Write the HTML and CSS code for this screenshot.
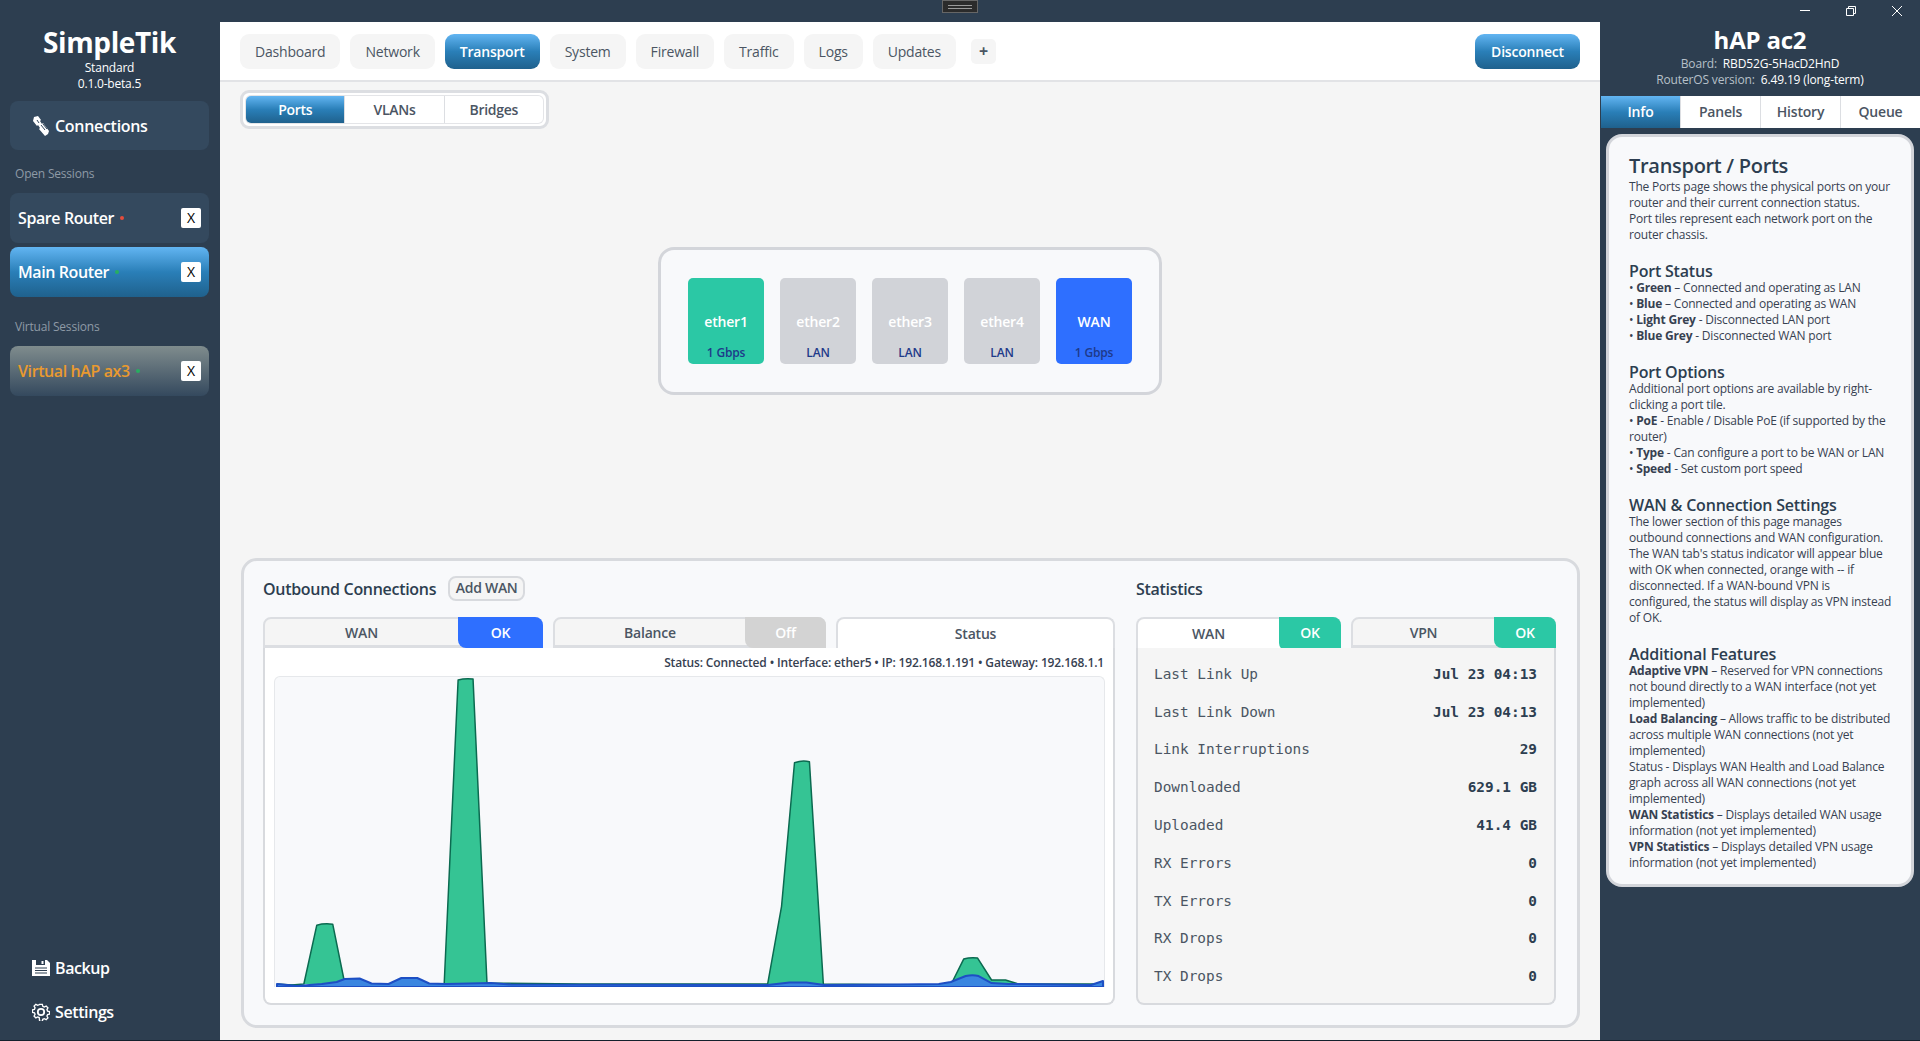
FILE: index.html
```html
<!DOCTYPE html>
<html lang="en">
<head>
<meta charset="utf-8">
<title>SimpleTik</title>
<link rel="stylesheet" href="styles.css">
</head>
<body>
<div class="app">
  <header class="titlebar">
    <div class="handle"><i></i><i></i></div>
    <div class="winctl">
      <svg class="winbtn" viewBox="0 0 46 22"><path d="M18 10.5h10" stroke="#fff" fill="none"/></svg>
      <svg class="winbtn" viewBox="0 0 46 22"><path d="M18.5 8.5h7v7h-7zM20.5 8.5v-2h7v7h-2" stroke="#fff" fill="none"/></svg>
      <svg class="winbtn" viewBox="0 0 46 22"><path d="M18 6l10 10M28 6l-10 10" stroke="#fff" fill="none"/></svg>
    </div>
  </header>
  <div class="workspace">
    <aside class="sidebar">
      <div class="brand">
        <div class="brand-name">SimpleTik</div>
        <div class="brand-sub">Standard</div>
        <div class="brand-sub">0.1.0-beta.5</div>
      </div>
      <button class="conn-btn">
        <svg class="conn-icon" viewBox="0 0 18 20"><path d="M2 1l4-1 3 4-1 1 2 3 1-1 6 8-1 3-3 2-6-7 1-1-2-3-1 1L1 5z" fill="#fff"/><path d="M5 4l2 3M9 9l4 5M11 8l4 5" stroke="#34495e" stroke-width="1" fill="none"/></svg>
        Connections
      </button>
      <div class="side-label first">Open Sessions</div>
      <div class="session"><span class="session-name">Spare Router</span><i class="dot red"></i><span class="close">X</span></div>
      <div class="session active"><span class="session-name">Main Router</span><i class="dot green"></i><span class="close">X</span></div>
      <div class="side-label second">Virtual Sessions</div>
      <div class="session virtual"><span class="session-name">Virtual hAP ax3</span><i class="dot green"></i><span class="close">X</span></div>
      <nav class="side-foot">
        <div class="foot-item">
          <svg class="foot-icon" viewBox="0 0 18 18"><path d="M0 1h15l3 3v13H0z" fill="#fff"/><path d="M4 1h9v5H4z" fill="#2d3e50"/><path d="M9.500 2h2v3h-2z" fill="#fff"/><path d="M3 9h12M3 11.500h12M3 14h12" stroke="#2d3e50" stroke-width="1.200"/></svg>
          Backup
        </div>
        <div class="foot-item">
          <svg class="foot-icon" viewBox="0 0 18 18"><path d="M7.500 1h3l.5 2.200 1.700.8 2-1.100 2 2-1.100 2 .7 1.600 2.200.5v2.900l-2.200.6-.7 1.600 1.100 2-2 2-2-1.100-1.700.7-.5 2.200h-3L7 15.700l-1.700-.7-2 1.100-2-2 1.100-2-.7-1.600L-.5 10V7.100l2.200-.5.7-1.600-1.100-2 2-2 2 1.100L7 1.300z" transform="translate(.9 .4) scale(.9)" fill="none" stroke="#fff" stroke-width="1.500"/><circle cx="9" cy="9" r="3.200" fill="none" stroke="#fff" stroke-width="1.800"/></svg>
          Settings
        </div>
      </nav>
    </aside>

    <main class="main">
      <div class="topnav">
        <span class="nav-tab">Dashboard</span>
        <span class="nav-tab">Network</span>
        <span class="nav-tab current">Transport</span>
        <span class="nav-tab">System</span>
        <span class="nav-tab">Firewall</span>
        <span class="nav-tab">Traffic</span>
        <span class="nav-tab">Logs</span>
        <span class="nav-tab">Updates</span>
        <span class="nav-plus">+</span>
        <span class="disconnect">Disconnect</span>
      </div>
      <div class="content">
        <div class="subtabs">
          <div class="subtabs-inner">
            <span class="subtab on">Ports</span>
            <span class="subtab">VLANs</span>
            <span class="subtab">Bridges</span>
          </div>
        </div>
        <div class="port-area">
          <div class="port-panel">
            <div class="port teal"><b>ether1</b><span>1 Gbps</span></div>
            <div class="port grey"><b>ether2</b><span>LAN</span></div>
            <div class="port grey"><b>ether3</b><span>LAN</span></div>
            <div class="port grey"><b>ether4</b><span>LAN</span></div>
            <div class="port blue"><b>WAN</b><span>1 Gbps</span></div>
          </div>
        </div>
        <section class="lower">
          <div class="col-left">
            <div class="sec-head">
              <h3>Outbound Connections</h3>
              <span class="add-wan">Add WAN</span>
            </div>
            <div class="tabrow">
              <div class="ftab wan"><span class="ftab-label">WAN</span><span class="badge b-blue">OK</span></div>
              <div class="ftab balance"><span class="ftab-label">Balance</span><span class="badge b-off">Off</span></div>
              <div class="ftab status open"><span class="ftab-label">Status</span></div>
            </div>
            <div class="card chart-card">
              <div class="status-line">Status: Connected • Interface: ether5 • IP: 192.168.1.191 • Gateway: 192.168.1.1</div>
              <div class="chart">
                <svg viewBox="273 677 833 311" preserveAspectRatio="none">
                  <path class="g" d="M275 985L290 986L302 985L315 926Q322 924 331 925L343 984L345 985L443 985L457 680Q464 678 472 679L486 984L580 985L768 985L782 907L795 763Q803 760 810 762L824 985L940 986L952 986L965 960Q972 958 979 959L993 981L1007 981L1020 985L1105 985"/>
                  <path class="b" d="M275 985L295 987L320 985L335 983L343 980L358 979.500L370 984.500L387 985L400 979L416 979L428 984.500L445 985L490 984L510 985.500L768 986L790 983.500L807 983.500L825 986L900 985.500L940 985L952 983L967 977Q974 975.500 980 977L993 984L1010 985L1060 985.500L1093 986L1105 982V988H275Z"/>
                </svg>
              </div>
            </div>
          </div>
          <div class="col-right">
            <div class="sec-head"><h3>Statistics</h3></div>
            <div class="tabrow">
              <div class="ftab stat open"><span class="ftab-label">WAN</span><span class="badge b-teal">OK</span></div>
              <div class="ftab stat"><span class="ftab-label">VPN</span><span class="badge b-teal">OK</span></div>
            </div>
            <div class="card stats-card">
              <div class="row"><span>Last Link Up</span><b>Jul 23 04:13</b></div>
              <div class="row"><span>Last Link Down</span><b>Jul 23 04:13</b></div>
              <div class="row"><span>Link Interruptions</span><b>29</b></div>
              <div class="row"><span>Downloaded</span><b>629.1 GB</b></div>
              <div class="row"><span>Uploaded</span><b>41.4 GB</b></div>
              <div class="row"><span>RX Errors</span><b>0</b></div>
              <div class="row"><span>TX Errors</span><b>0</b></div>
              <div class="row"><span>RX Drops</span><b>0</b></div>
              <div class="row"><span>TX Drops</span><b>0</b></div>
            </div>
          </div>
        </section>
      </div>
    </main>

    <aside class="info">
      <div class="device">
        <div class="device-name">hAP ac2</div>
        <div class="device-line"><span>Board:</span> RBD52G-5HacD2HnD</div>
        <div class="device-line"><span>RouterOS version:</span> 6.49.19 (long-term)</div>
      </div>
      <div class="info-tabs">
        <span class="info-tab on">Info</span>
        <span class="info-tab">Panels</span>
        <span class="info-tab">History</span>
        <span class="info-tab">Queue</span>
      </div>
      <div class="help">
        <h2>Transport / Ports</h2>
        <p>The Ports page shows the physical ports on your<br>router and their current connection status.<br>Port tiles represent each network port on the<br>router chassis.</p>
        <h4>Port Status</h4>
        <p>• <b>Green</b> – Connected and operating as LAN<br>• <b>Blue</b> – Connected and operating as WAN<br>• <b>Light Grey</b> - Disconnected LAN port<br>• <b>Blue Grey</b> - Disconnected WAN port</p>
        <h4>Port Options</h4>
        <p>Additional port options are available by right-<br>clicking a port tile.<br>• <b>PoE</b> - Enable / Disable PoE (if supported by the<br>router)<br>• <b>Type</b> - Can configure a port to be WAN or LAN<br>• <b>Speed</b> - Set custom port speed</p>
        <h4>WAN &amp; Connection Settings</h4>
        <p>The lower section of this page manages<br>outbound connections and WAN configuration.<br>The WAN tab's status indicator will appear blue<br>with OK when connected, orange with -- if<br>disconnected. If a WAN-bound VPN is<br>configured, the status will display as VPN instead<br>of OK.</p>
        <h4>Additional Features</h4>
        <p><b>Adaptive VPN</b> – Reserved for VPN connections<br>not bound directly to a WAN interface (not yet<br>implemented)<br><b>Load Balancing</b> – Allows traffic to be distributed<br>across multiple WAN connections (not yet<br>implemented)<br>Status - Displays WAN Health and Load Balance<br>graph across all WAN connections (not yet<br>implemented)<br><b>WAN Statistics</b> – Displays detailed WAN usage<br>information (not yet implemented)<br><b>VPN Statistics</b> – Displays detailed VPN usage<br>information (not yet implemented)</p>
      </div>
    </aside>
  </div>
</div>
</body>
</html>
```
FILE: styles.css
```css
* { box-sizing: border-box; }
html, body { margin: 0; height: 100%; overflow: hidden; }
body { font-family: "Open Sans", "Noto Sans", sans-serif; color: #2d3e50; font-size: 12px; }
.app { width: 1920px; height: 1041px; background: #2d3e50; display: flex; flex-direction: column; border-bottom: 1px solid #14202c; position: relative; }

.titlebar { height: 22px; flex: none; display: flex; justify-content: flex-end; }
.handle { position: absolute; left: 942px; top: 0; width: 36px; height: 13px; background: #2b2b2b; border: 1px solid #666; display: flex; flex-direction: column; justify-content: center; align-items: center; gap: 2px; }
.handle i { display: block; width: 24px; height: 1px; background: #999; }
.winctl { display: flex; }
.winbtn { width: 46px; height: 22px; display: block; }

.workspace { flex: 1; display: flex; min-height: 0; }

/* Sidebar */
.sidebar { width: 220px; flex: none; padding: 0 11px 0 10px; display: flex; flex-direction: column; color: #fff; }
.brand { text-align: center; padding-top: 4px; }
.brand-name { font-size: 28px; font-weight: 700; line-height: 32px; margin-bottom: 2px; letter-spacing: -.4px; }
.brand-sub { font-size: 12px; line-height: 16px; letter-spacing: -.2px; }
.conn-btn { margin-top: 9px; height: 49px; border: 0; border-radius: 8px; background: #34495e; color: #fff; font: 600 16px "Open Sans", sans-serif; letter-spacing: -.3px; display: flex; align-items: center; padding: 0 0 0 22px; gap: 5px; }
.conn-icon { width: 18px; height: 20px; }
.side-label { font-size: 12px; color: #8e9aa6; line-height: 16px; padding-left: 5px; letter-spacing: -.2px; }
.side-label.first { margin-top: 16px; margin-bottom: 11px; }
.side-label.second { margin-top: 18px; margin-bottom: 11px; }
.session { height: 50px; border-radius: 8px; background: #34495e; display: flex; align-items: center; padding: 0 8px; margin-bottom: 4px; font-size: 16px; font-weight: 600; letter-spacing: -.4px; }
.session.active { background: linear-gradient(#62b5f2, #2a7fb8 50%, #1f618d); }
.session.virtual { background: linear-gradient(#7f8c8d, #34495e); color: #ea9a2e; }
.session-name { margin-right: 6px; }
.dot { width: 4px; height: 4px; border-radius: 50%; display: block; }
.dot.red { background: #e74c3c; }
.dot.green { background: #27ae60; }
.close { margin-left: auto; width: 20px; height: 20px; background: #fff; color: #000; border-radius: 2px; font-size: 14px; font-weight: 400; line-height: 20px; text-align: center; letter-spacing: 0; }
.side-foot { margin-top: auto; padding: 0 0 16px 22px; display: flex; flex-direction: column; gap: 20px; }
.foot-item { display: flex; align-items: center; gap: 5px; font-size: 16px; font-weight: 600; line-height: 24px; letter-spacing: -.4px; }
.foot-icon { width: 18px; height: 18px; }

/* Main */
.main { width: 1380px; flex: none; background: #f5f5f5; display: flex; flex-direction: column; }
.topnav { height: 60px; flex: none; background: #fff; border-bottom: 2px solid #e2e3e6; display: flex; align-items: flex-start; padding: 12px 20px 0; gap: 10px; }
.nav-tab { height: 35px; line-height: 35px; padding: 0 15px; background: #f5f5f5; border-radius: 9px; font-size: 14px; font-weight: 500; color: #4b5563; letter-spacing: -.2px; }
.nav-tab.current, .disconnect { background: linear-gradient(#62b5f2, #2a7fb8 50%, #1f618d); color: #fff; font-weight: 600; }
.nav-plus { width: 25px; height: 25px; margin: 5px 0 0 5px; background: #f5f5f5; border-radius: 5px; text-align: center; line-height: 24px; font-size: 16px; font-weight: 700; color: #4b5563; }
.disconnect { margin-left: auto; height: 35px; width: 105px; border-radius: 9px; text-align: center; line-height: 35px; font-size: 14px; letter-spacing: -.2px; }

.content { flex: 1; min-height: 0; display: flex; flex-direction: column; padding: 8px 20px 12px 21px; }
.subtabs { align-self: flex-start; margin-left: -1px; width: 309px; height: 39px; border: 3px solid #dcdee2; border-radius: 9px; background: #fff; padding: 3px; }
.subtabs-inner { display: flex; height: 100%; border-radius: 5px; overflow: hidden; box-shadow: 0 0 0 1px #e4e5e8; }
.subtab { flex: 1; text-align: center; line-height: 27px; font-size: 14px; font-weight: 600; color: #4b5563; border-left: 1px solid #dcdee2; letter-spacing: -.3px; }
.subtab.on { background: linear-gradient(#62b5f2, #2a7fb8 50%, #1f618d); color: #fff; border-left: 0; }

.port-area { flex: 1; min-height: 0; display: flex; justify-content: center; align-items: flex-start; padding-top: 118px; }
.port-panel { display: flex; gap: 16px; padding: 28px 27px; background: #f8f9fb; border: 3px solid #d3d5da; border-radius: 16px; height: 148px; margin-left: -1px; }
.port { width: 76px; height: 86px; border-radius: 5px; display: flex; flex-direction: column; align-items: center; color: #fff; padding-top: 34px; }
.port b { font-size: 14px; line-height: 20px; font-weight: 600; letter-spacing: -.2px; }
.port span { font-size: 12px; line-height: 18px; margin-top: 12px; font-weight: 600; color: #1e3a8a; letter-spacing: -.2px; }
.teal { background: #2bc8a5; }
.grey { background: #d1d3d8; }
.blue { background: #2e6fff; }

.lower { height: 470px; flex: none; background: #f8f9fb; border: 3px solid #d8dade; border-radius: 16px; padding: 15px 20px 20px 19px; display: flex; gap: 21px; }
.col-left { width: 852px; flex: none; display: flex; flex-direction: column; }
.col-right { flex: 1; display: flex; flex-direction: column; }
.sec-head { height: 25px; flex: none; display: flex; align-items: center; gap: 12px; margin-bottom: 16px; }
.sec-head h3 { margin: 0; font-size: 16px; font-weight: 600; letter-spacing: -.3px; }
.add-wan { height: 25px; width: 77px; border: 2px solid #d8dade; border-radius: 8px; background: #f5f5f5; text-align: center; line-height: 20px; font-size: 14px; font-weight: 600; color: #4b5563; letter-spacing: -.3px; }

.tabrow { height: 31px; flex: none; display: flex; gap: 10px; }
.ftab { display: flex; height: 31px; background: #f5f5f5; border: 2px solid #dcdee2; border-bottom-width: 3px; border-radius: 8px 8px 0 0; font-size: 14px; font-weight: 600; color: #4b5563; letter-spacing: -.2px; overflow: visible; }
.ftab-label { flex: 1; text-align: center; line-height: 27px; }
.badge { width: 85px; margin: -2px -2px -3px 0; border-radius: 0 8px 0 8px; color: #fff; text-align: center; line-height: 31px; }
.ftab.wan { width: 280px; }
.ftab.balance { width: 273px; }
.ftab.status { width: 279px; }
.ftab.stat { width: 205px; }
.ftab.open { background: #fff; border-bottom: 0; }
.ftab.open .ftab-label { line-height: 30px; }
.ftab.stat .badge { width: 62px; }
.b-blue { background: #2e6fff; }
.b-off { background: #d3d3d3; width: 81px; }
.b-teal { background: #2bc8a5; }

.card { flex: 1; min-height: 0; border: 2px solid #d8dade; border-top: 0; border-radius: 0 0 8px 8px; }
.chart-card { background: #fff; padding: 0 8px 16px 9px; display: flex; flex-direction: column; margin-top: 0; }
.status-line { height: 28px; flex: none; line-height: 30px; text-align: right; font-size: 12px; font-weight: 600; color: #374151; letter-spacing: -.15px; padding-right: 1px; }
.chart { flex: 1; min-height: 0; background: #f8f9fb; border: 1px solid #e6e8eb; border-bottom: 0; border-radius: 6px 6px 0 0; }
.chart svg { display: block; width: 100%; height: 100%; }
.g { fill: #35c494; stroke: #0b6a50; stroke-width: 1.500; stroke-linejoin: round; }
.b { fill: #3a86e0; stroke: #1d4fc4; stroke-width: 2; stroke-linejoin: round; opacity: 1; }

.stats-card { background: #f5f5f5; width: 420px; padding: 7px 17px 0 16px; }
.row { height: 37.800px; display: flex; justify-content: space-between; align-items: center; font-family: "DejaVu Sans Mono", monospace; font-size: 14.400px; color: #4b5563; }
.row b { font-weight: 700; color: #2d3e50; }

/* Info */
.info { width: 320px; flex: none; display: flex; flex-direction: column; color: #fff; }
.device { text-align: center; height: 74px; }
.device-name { font-size: 24px; font-weight: 700; line-height: 32px; padding-top: 2px; height: 34px; margin-bottom: 0; letter-spacing: -.2px; }
.device-line { font-size: 12px; line-height: 16px; letter-spacing: -.15px; }
.device-line span { color: #b7c0c9; margin-right: 3px; }
.info-tabs { height: 32px; flex: none; display: flex; margin-left: 1px; background: #fff; }
.info-tab { flex: 1; text-align: center; line-height: 32px; font-size: 14px; font-weight: 600; color: #4b5563; border-left: 1px solid #dcdee2; letter-spacing: -.2px; }
.info-tab.on { background: linear-gradient(#62b5f2, #2a7fb8 50%, #1f618d); color: #fff; border: 0; }
.help { margin: 6px 6px 0; background: #f8f9fb; border: 3px solid #d3d5da; border-radius: 16px; padding: 16px 10px 13px 20px; color: #2d3e50; }
.help h2 { margin: 0; font-size: 20px; font-weight: 600; line-height: 26px; letter-spacing: -.3px; }
.help h4 { margin: 19px 0 0; font-size: 16px; font-weight: 600; line-height: 18px; letter-spacing: -.2px; }
.help p { margin: 0; font-size: 12px; line-height: 16px; color: #374151; letter-spacing: -.2px; white-space: nowrap; }
```
